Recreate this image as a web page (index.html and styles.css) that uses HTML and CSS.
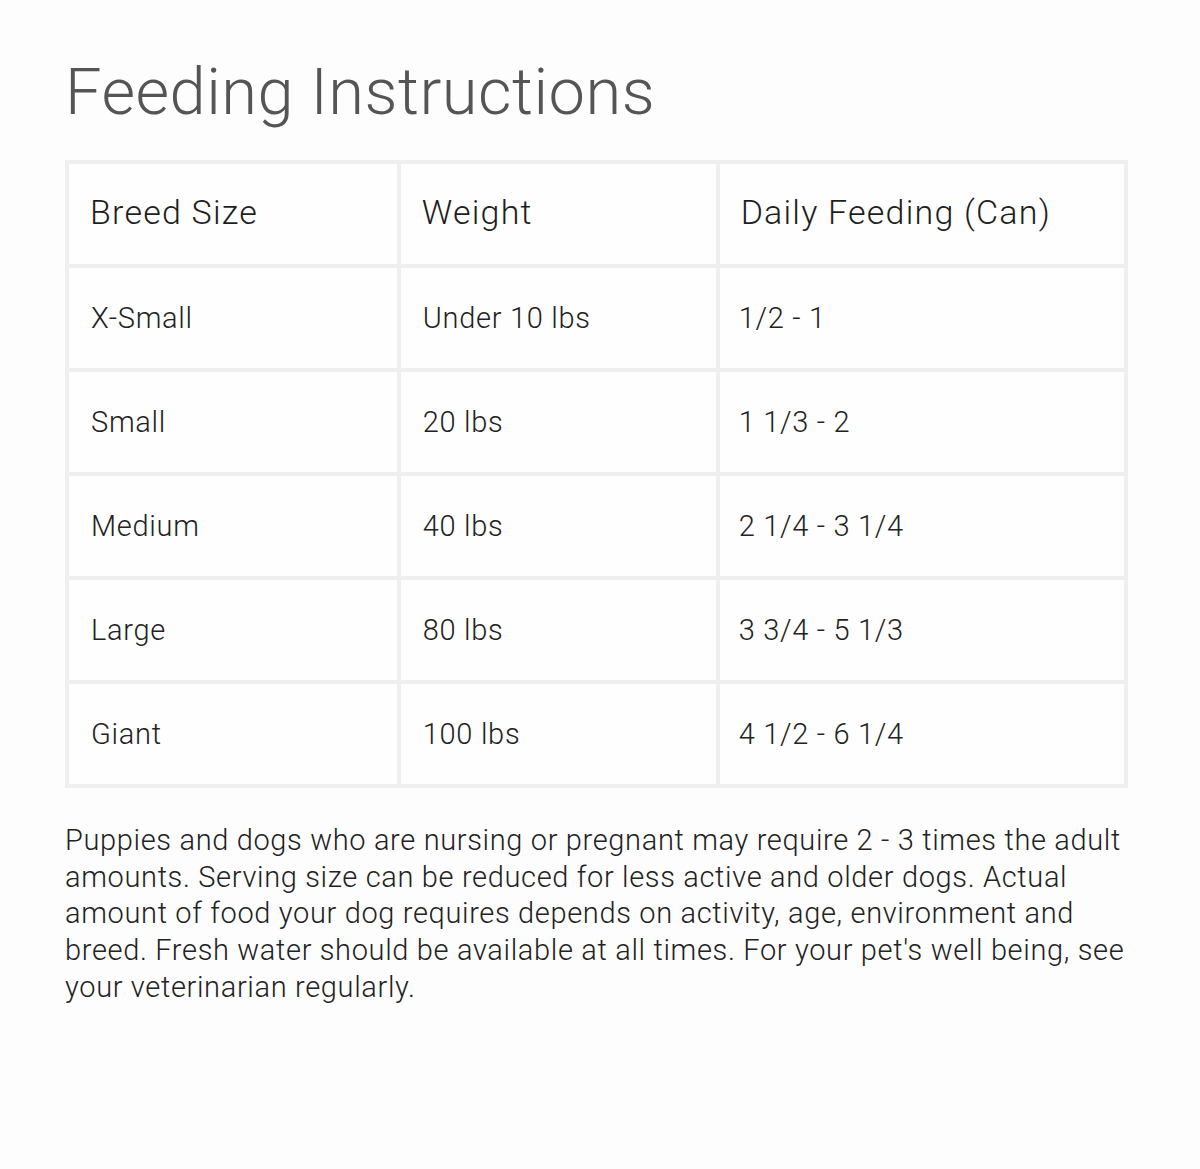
FILE: index.html
```html
<!DOCTYPE html>
<html>
<head>
<meta charset="utf-8">
<link rel="stylesheet" href="styles.css">
</head>
<body>
<div class="page">
  <h1 class="title">Feeding Instructions</h1>
  <table class="feed">
    <colgroup>
      <col class="c1"><col class="c2"><col class="c3">
    </colgroup>
    <thead>
      <tr><th>Breed Size</th><th>Weight</th><th>Daily Feeding (Can)</th></tr>
    </thead>
    <tbody>
      <tr><td>X-Small</td><td>Under 10 lbs</td><td>1/2 - 1</td></tr>
      <tr><td>Small</td><td>20 lbs</td><td>1 1/3 - 2</td></tr>
      <tr><td>Medium</td><td>40 lbs</td><td>2 1/4 - 3 1/4</td></tr>
      <tr><td>Large</td><td>80 lbs</td><td>3 3/4 - 5 1/3</td></tr>
      <tr><td>Giant</td><td>100 lbs</td><td>4 1/2 - 6 1/4</td></tr>
    </tbody>
  </table>
  <p class="note">Puppies and dogs who are nursing or pregnant may require 2 - 3 times the adult amounts. Serving size can be reduced for less active and older dogs. Actual amount of food your dog requires depends on activity, age, environment and breed. Fresh water should be available at all times. For your pet's well being, see your veterinarian regularly.</p>
</div>
</body>
</html>
```
FILE: styles.css
```css
html, body {
  margin: 0;
  padding: 0;
  background: #fdfdfd;
}
.page {
  padding: 54px 70px 0 65px;
  font-family: Roboto, "Liberation Sans", sans-serif;
  font-weight: 300;
  color: #222;
}
.title {
  margin: 0 0 30px 0;
  font-size: 65px;
  line-height: 76px;
  font-weight: 300;
  letter-spacing: 0.5px;
  color: #555;
}
.feed {
  border-collapse: collapse;
  width: 1063px;
  background: #fefefe;
  border: 4px solid #efefef;
}
.c1 { width: 333px; }
.c2 { width: 320px; }
.c3 { width: 410px; }
.feed th, .feed td {
  border: 4px solid #efefef;
  text-align: left;
  vertical-align: middle;
  padding: 0 22px;
  font-weight: 300;
}
.feed th {
  height: 96px;
  padding-left: 21px;
  padding-bottom: 4px;
  font-size: 34px;
  letter-spacing: 1.2px;
  color: #1e1e1e;
}
.feed td {
  height: 100px;
  font-size: 29px;
  letter-spacing: 0.7px;
  color: #222;
}
.feed td:nth-child(3) { padding-left: 19px; }
.note {
  margin: 34px 0 0 0;
  font-size: 29px;
  line-height: 36.7px;
  letter-spacing: 0.65px;
  color: #222;
}
```
